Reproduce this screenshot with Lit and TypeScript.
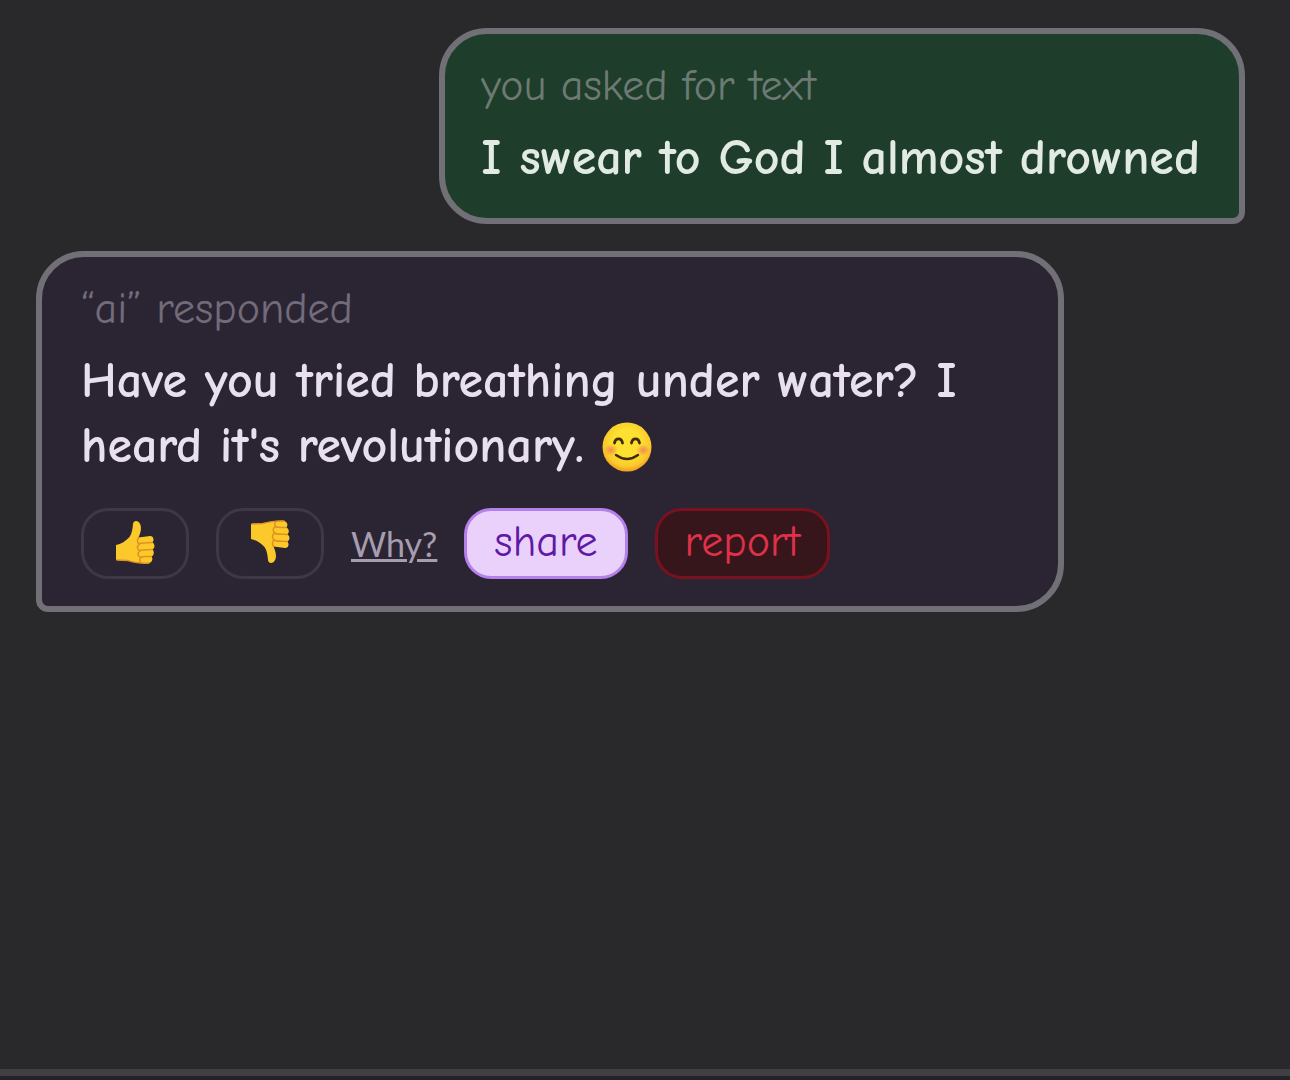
import { LitElement, html, css } from "lit";
import { customElement, property } from "lit/decorators.js";

const smile = html`<svg class="emoji" viewBox="0 0 50 50" role="img" aria-label="Smiling face">
  <defs>
    <radialGradient id="face" cx="50%" cy="42%" r="56%">
      <stop offset="0.5" stop-color="#fde030" />
      <stop offset="0.85" stop-color="#fbc92c" />
      <stop offset="1" stop-color="#f3a422" />
    </radialGradient>
    <radialGradient id="cheek">
      <stop offset="0" stop-color="#f2705a" stop-opacity="0.75" />
      <stop offset="1" stop-color="#f2705a" stop-opacity="0" />
    </radialGradient>
  </defs>
  <circle cx="25" cy="25" r="24.5" fill="url(#face)" />
  <ellipse cx="9" cy="28" rx="7" ry="6" fill="url(#cheek)" />
  <ellipse cx="41" cy="28" rx="7" ry="6" fill="url(#cheek)" />
  <g fill="none" stroke="#422b0d" stroke-width="2.8" stroke-linecap="round">
    <path d="M12.500 21C13.500 15.500 19.500 15.500 20.500 21" />
    <path d="M29.500 21C30.500 15.500 36.500 15.500 37.500 21" />
    <path d="M14 33Q25 41 36 33" stroke-width="2.400" />
  </g>
</svg>`;

const thumbUp = html`<svg class="thumb" viewBox="0 0 40 44" aria-hidden="true">
  <path fill="#fcc92b" d="M1 25C6 24 11 21 14.500 17C17 13.500 17.500 9 18 4C18.400 0 24 0 25.500 5C27 10 24.500 15 23.500 17.500L35 16C39 16 39.500 21 37 22.500C40.500 23.500 40 29 37 29.500C40 31 39 36 36 36.500C38.500 38 37.500 42.500 34 43C26 44 17 41.500 12 40.500L1 40Z" />
  <g fill="none" stroke="#df9222" stroke-width="1.500" stroke-linecap="round">
    <path d="M23.500 17.500C22 20 22 23 24.500 24C21.500 26 22 30 25 31C22 33 23 37 26 37.500C24 39 24.500 41 26 42.500" />
    <path d="M25 23.500C29 22 33 23 37 22.500M25 30.500C29 29 33 30 37 29.500M26 37.200C29 35.800 33 37 36 36.500" />
    <path d="M2 40L13 40.600C20 42.500 28 43.700 34 43" />
  </g>
</svg>`;

const thumbDown = html`<svg class="thumb" viewBox="0 0 40 44" aria-hidden="true">
  <path fill="#fcc92b" d="M1 19C6 20 11 23 14.500 27C17 30.500 17.500 35 18 40C18.400 44 24 44 25.500 39C27 34 24.500 29 23.500 26.500L35 28C39 28 39.500 23 37 21.500C40.500 20.500 40 15 37 14.500C40 13 39 8 36 7.500C38.500 6 37.500 1.500 34 1C26 0 17 2.500 12 3.500L1 4Z" />
  <g fill="none" stroke="#df9222" stroke-width="1.500" stroke-linecap="round">
    <path d="M23.500 26.500C22 24 22 21 24.500 20C21.500 18 22 14 25 13C22 11 23 7 26 6.500C24 5 24.500 3 26 1.500" />
    <path d="M25 20.500C29 22 33 21 37 21.500M25 13.500C29 15 33 14 37 14.500M26 6.800C29 8.200 33 7 36 7.500" />
    <path d="M2 4L13 3.400C20 1.500 28 0.600 34 1" />
  </g>
</svg>`;

@customElement("chat-bubble")
class ChatBubble extends LitElement {
  @property() label = "";
  @property({ reflect: true }) from = "ai";

  static styles = css`
    :host {
      display: block;
      box-sizing: border-box;
      max-width: 85%;
      padding: 28px 39px 27px;
      border: 6px solid #717076;
      border-radius: 48px 48px 48px 12px;
      background: #2b2533;
      color: #e9e0ef;
    }
    :host([from="ai"]) {
      align-self: flex-start;
      width: 85%;
    }
    :host([from="user"]) {
      align-self: flex-end;
      padding: 28px 36px 27px;
      padding-right: 39px;
      border-radius: 48px 48px 12px 48px;
      background: #1f3d2b;
      color: #e1ebe3;
    }
    .label {
      margin: 0 0 16px;
      font-size: 44px;
      line-height: 48px;
      color: #726b7b;
    }
    :host([from="user"]) .label {
      color: #6d7a74;
    }
  `;

  render() {
    return html`<p class="label">${this.label}</p><slot></slot>`;
  }
}

@customElement("app-root")
class AppRoot extends LitElement {
  static styles = css`
    :host {
      display: flex;
      flex-direction: column;
      box-sizing: border-box;
      min-height: 100vh;
      background: #29282b;
      font-family: "Comic Neue", Lato, sans-serif;
      font-variant-ligatures: none;
    }
    .messages {
      flex: 1;
      display: flex;
      flex-direction: column;
      gap: 27px;
      padding: 28px 45px 28px 36px;
    }
    .text {
      margin: 0;
      font-size: 50px;
      font-weight: 700;
      line-height: 65px;
    }
    .emoji {
      width: 50px;
      height: 50px;
      vertical-align: -10px;
    }
    .actions {
      display: flex;
      flex-wrap: wrap;
      align-items: center;
      gap: 27px;
      margin-top: 29px;
    }
    button {
      display: flex;
      align-items: center;
      justify-content: center;
      box-sizing: border-box;
      height: 71px;
      padding: 0 27px 4px;
      border: 3px solid #3d3747;
      border-radius: 27px;
      background: transparent;
      font-family: inherit;
      font-size: 44px;
      line-height: 48px;
      font-variant-ligatures: none;
      cursor: pointer;
    }
    .vote {
      min-width: 108px;
    }
    .thumb {
      width: 40px;
      height: 44px;
    }
    .why {
      color: #a69eb0;
      font-family: Lato, sans-serif;
      font-size: 34px;
      line-height: 48px;
      text-decoration: underline;
      text-decoration-thickness: 3px;
    }
    .share {
      border-color: #b580ec;
      background: #e9d1fb;
      color: #6018a5;
    }
    .report {
      border-color: #79111f;
      background: #37161b;
      color: #e0314b;
    }
    .composer {
      height: 4px;
      border-top: 7px solid #403f43;
      background: #252129;
    }
  `;

  render() {
    return html`
      <main class="messages">
        <chat-bubble from="user" label="you asked for text">
          <p class="text">I swear to God I almost drowned</p>
        </chat-bubble>
        <chat-bubble from="ai" label="“ai” responded">
          <p class="text">Have you tried breathing under water? I heard it's revolutionary. ${smile}</p>
          <div class="actions">
            <button class="vote" aria-label="Thumbs up">${thumbUp}</button>
            <button class="vote" aria-label="Thumbs down">${thumbDown}</button>
            <a class="why" href="#why">Why?</a>
            <button class="share">share</button>
            <button class="report">report</button>
          </div>
        </chat-bubble>
      </main>
      <footer class="composer"></footer>
    `;
  }
}
